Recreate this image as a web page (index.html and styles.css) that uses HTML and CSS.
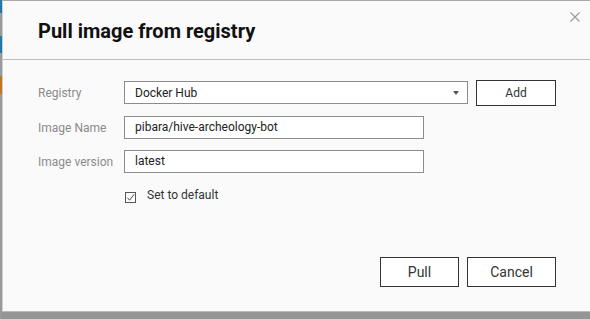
FILE: index.html
```html
<!DOCTYPE html>
<html>
<head>
<meta charset="utf-8">
<link rel="stylesheet" href="styles.css">
</head>
<body>
<div class="page">
  <div class="strip">
    <div class="seg seg-blue1"></div>
    <div class="seg seg-gap1"></div>
    <div class="seg seg-blue2"></div>
    <div class="seg seg-gap2"></div>
    <div class="seg seg-orange"></div>
  </div>
  <div class="dialog">
    <div class="header">
      <h1 class="title">Pull image from registry</h1>
      <button class="close" aria-label="Close">
        <svg width="10" height="10" viewBox="0 0 10 10"><path d="M0.5 0.5 L9.5 9.5 M9.5 0.5 L0.5 9.5" stroke="#9a9a9a" stroke-width="1.1" fill="none"/></svg>
      </button>
    </div>
    <div class="form">
      <div class="row row-registry">
        <label class="label">Registry</label>
        <div class="select">
          <span class="select-text">Docker Hub</span>
          <span class="caret"></span>
        </div>
        <button class="btn btn-add">Add</button>
      </div>
      <div class="row row-name">
        <label class="label">Image Name</label>
        <div class="input">pibara/hive-archeology-bot</div>
      </div>
      <div class="row row-version">
        <label class="label">Image version</label>
        <div class="input">latest</div>
      </div>
      <div class="row row-check">
        <span class="checkbox">
          <svg width="11" height="11" viewBox="0 0 11 11"><rect x="0.5" y="0.5" width="10" height="10" fill="#fff" stroke="#555"/><path d="M2.3 5.6 L4.6 8.2 L9.2 2.2" stroke="#444" stroke-width="1" fill="none"/></svg>
        </span>
        <span class="check-label">Set to default</span>
      </div>
    </div>
    <div class="footer">
      <button class="btn btn-pull">Pull</button>
      <button class="btn btn-cancel">Cancel</button>
    </div>
  </div>
</div>
</body>
</html>
```

FILE: styles.css
```css
html, body {
  margin: 0;
  padding: 0;
}
body {
  background: #959595;
  font-family: Roboto, "Liberation Sans", Arial, sans-serif;
  width: 590px;
  height: 319px;
  overflow: hidden;
}
.page {
  display: flex;
  height: 319px;
}
.strip {
  width: 2px;
  display: flex;
  flex-direction: column;
  background: #9a9a9a;
}
.seg { width: 2px; }
.seg-blue1 { height: 13px; background: #1f7aa6; }
.seg-gap1 { height: 23px; }
.seg-blue2 { height: 17px; background: #1f7aa6; }
.seg-gap2 { height: 23px; }
.seg-orange { height: 18px; background: #c0761f; }

.dialog {
  flex: 1;
  height: 310px;
  background: #fafafa;
  border-left: 1px solid #cfcfcf;
  border-top: 1px solid #a8a8a8;
  border-bottom: 1px solid #b8b8b8;
  display: flex;
  flex-direction: column;
}
.header {
  height: 58px;
  border-bottom: 1px solid #bdbdbd;
  display: flex;
  justify-content: space-between;
  align-items: flex-start;
}
.title {
  margin: 18px 0 0 35px;
  font-size: 20px;
  font-weight: 700;
  color: #111;
  line-height: 24px;
}
.close {
  border: 0;
  background: none;
  padding: 0;
  margin: 11px 10px 0 0;
  width: 10px;
  height: 10px;
  display: flex;
}
.form {
  padding: 20px 0 0 35px;
  display: flex;
  flex-direction: column;
}
.row {
  display: flex;
  align-items: center;
}
.label {
  width: 86px;
  font-size: 12px;
  color: #8a8a8a;
}
.row-registry { height: 26px; }
.row-name { margin-top: 10px; height: 23px; }
.row-version { margin-top: 11px; height: 23px; }
.row-check {
  margin-top: 16px;
  padding-left: 87px;
  align-items: flex-start;
}

.select {
  width: 324px;
  height: 21px;
  border: 1px solid #8c8c8c;
  background: #fff;
  display: flex;
  align-items: center;
  justify-content: space-between;
  padding: 0 8px 0 10px;
  box-sizing: content-box;
  margin-top: -1px;
}
.select-text {
  font-size: 12px;
  color: #222;
}
.caret {
  width: 0;
  height: 0;
  border-left: 3px solid transparent;
  border-right: 3px solid transparent;
  border-top: 4px solid #555;
}
.input {
  width: 288px;
  height: 21px;
  border: 1px solid #8c8c8c;
  background: #fff;
  padding: 0 0 0 10px;
  font-size: 12px;
  color: #222;
  line-height: 21px;
}
.btn {
  font-family: Roboto, "Liberation Sans", Arial, sans-serif;
  background: #fff;
  border: 1px solid #333;
  color: #333;
  padding: 0;
  box-sizing: border-box;
}
.btn-add {
  width: 80px;
  height: 26px;
  margin-left: 8px;
  font-size: 12px;
}
.checkbox {
  width: 11px;
  height: 11px;
  margin-top: 3px;
  display: flex;
}
.check-label {
  margin-left: 11px;
  font-size: 12px;
  line-height: 12px;
  color: #333;
}
.footer {
  margin-top: auto;
  display: flex;
  justify-content: flex-end;
  gap: 8px;
  padding: 0 34px 24px 0;
}
.btn-pull {
  width: 79px;
  height: 30px;
  font-size: 14px;
}
.btn-cancel {
  width: 89px;
  height: 30px;
  font-size: 14px;
}
```
